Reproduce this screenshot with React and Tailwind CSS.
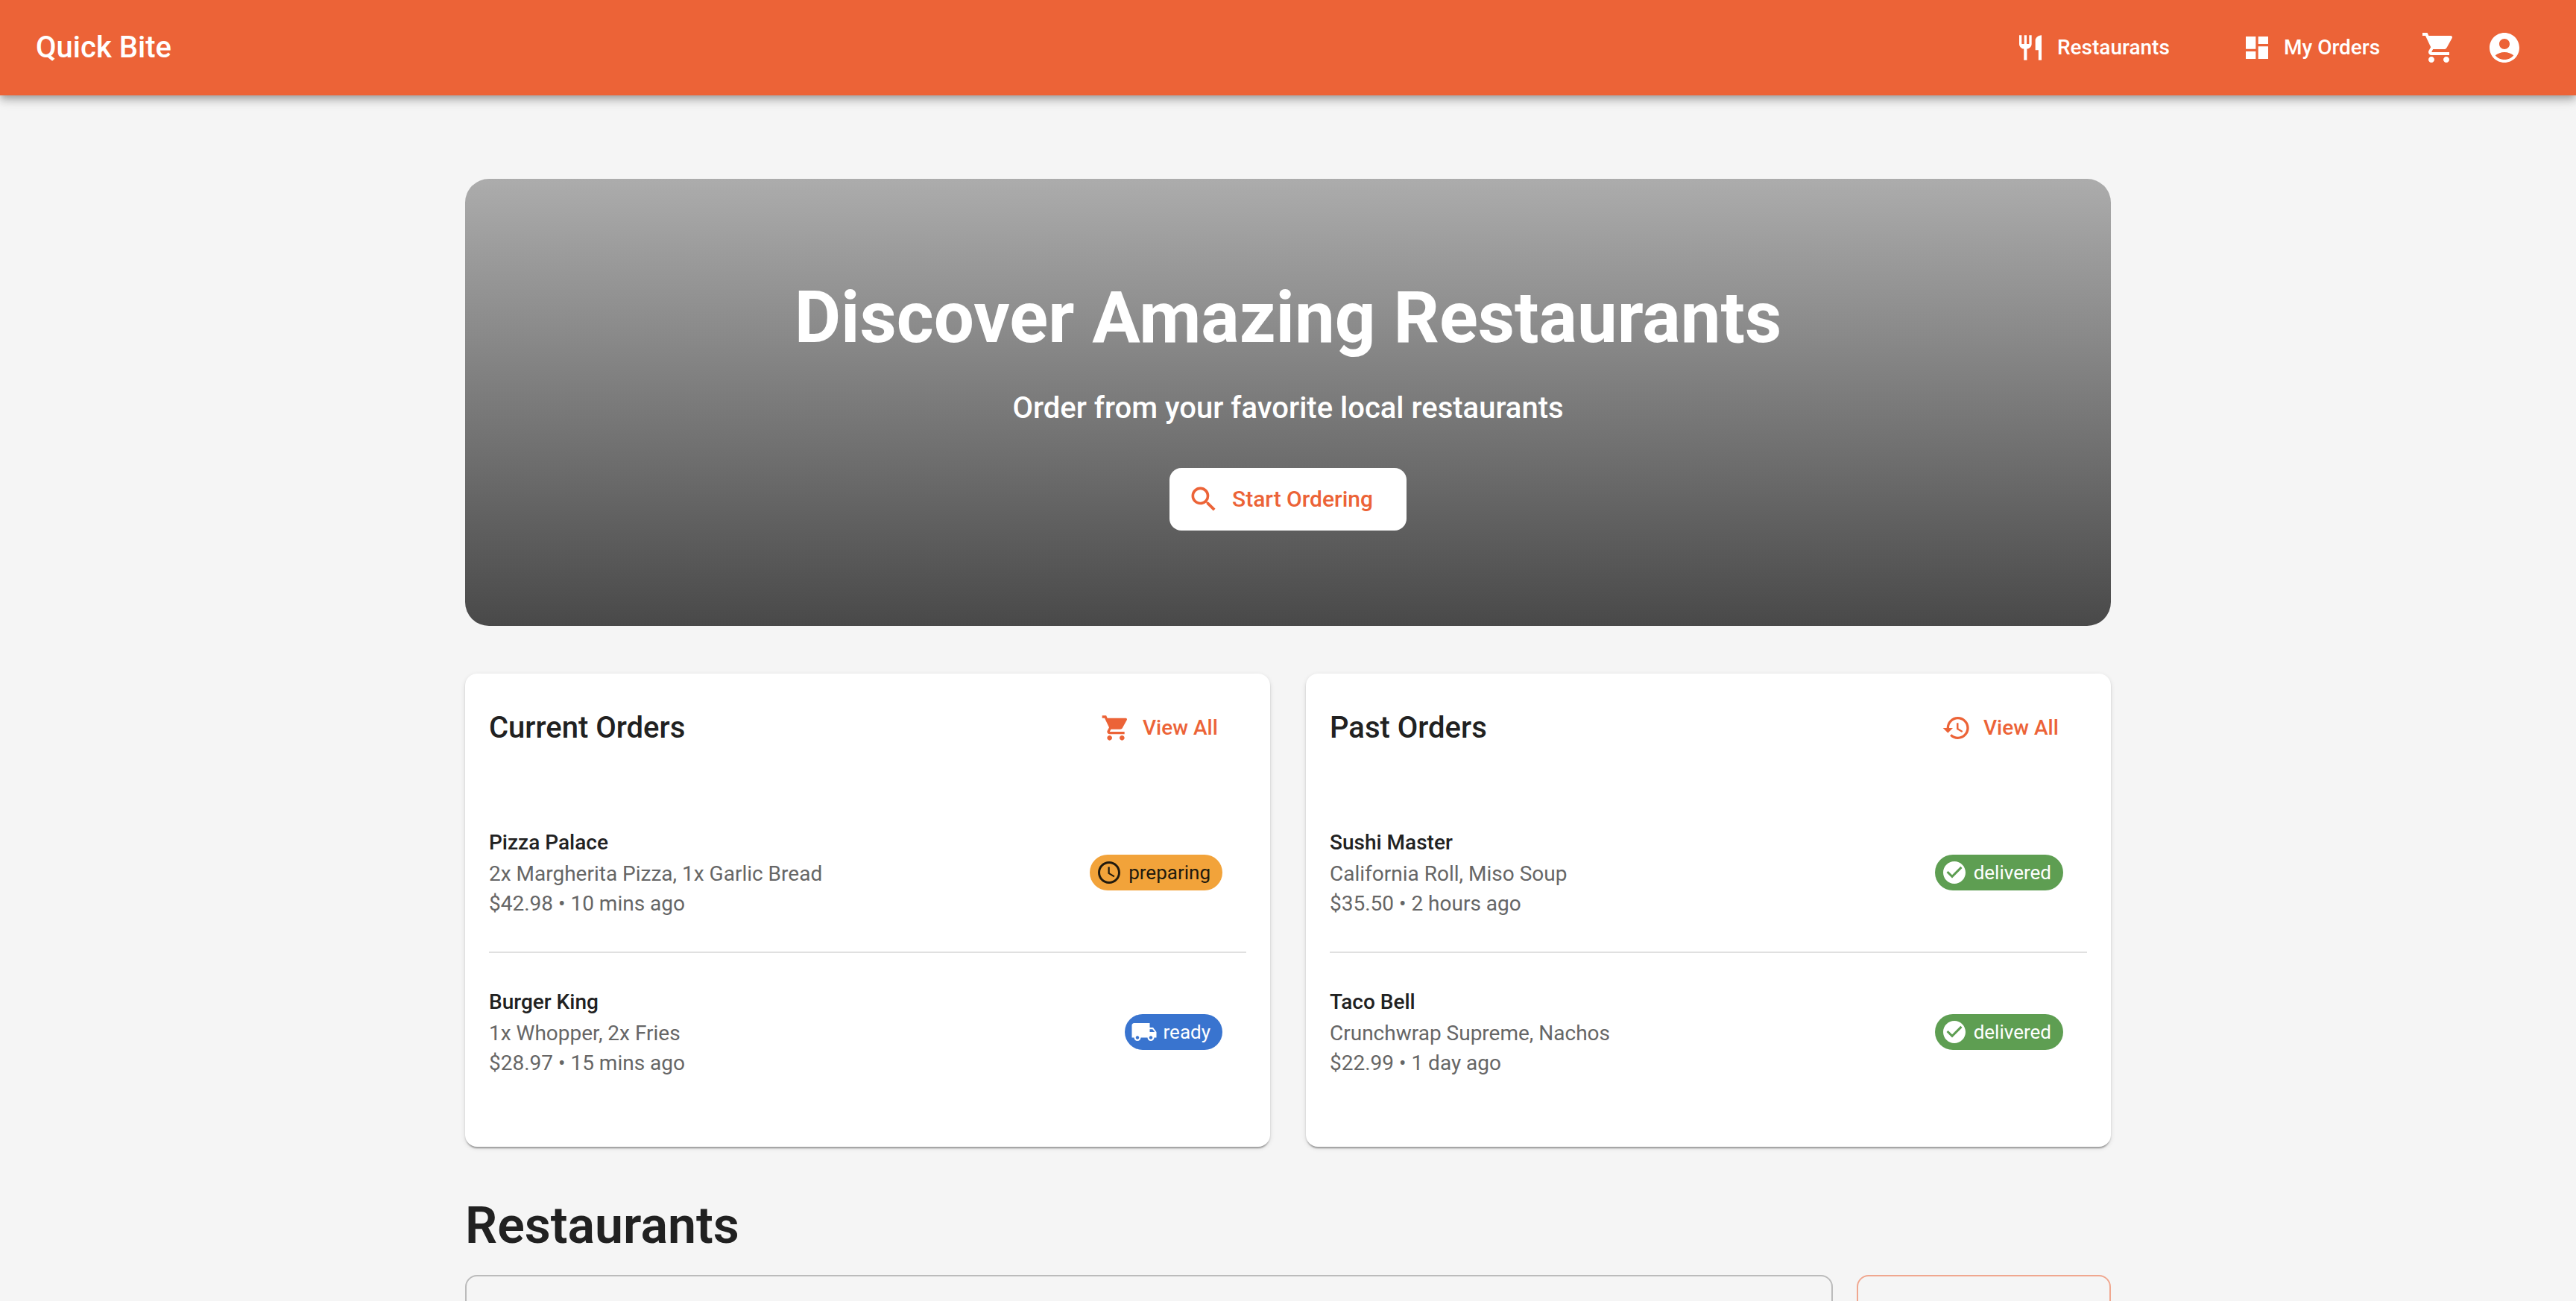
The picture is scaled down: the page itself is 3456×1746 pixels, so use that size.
import React from "react";
import {
  MdAccessTime,
  MdCheckCircle,
  MdDashboard,
  MdHistory,
  MdLocalShipping,
  MdRestaurant,
  MdSearch,
  MdShoppingCart,
} from "react-icons/md";

function AccountIcon({ className }) {
  return (
    <svg viewBox="0 0 24 24" fill="currentColor" className={className} aria-hidden="true">
      <path d="M12 2C6.48 2 2 6.48 2 12s4.48 10 10 10 10-4.48 10-10S17.52 2 12 2zm0 4c1.93 0 3.5 1.57 3.5 3.5S13.93 13 12 13s-3.5-1.57-3.5-3.5S10.07 6 12 6zm0 14c-2.03 0-4.43-.82-6.14-2.88C7.55 15.8 9.68 15 12 15s4.45.8 6.14 2.12C16.43 19.18 14.03 20 12 20z" />
    </svg>
  );
}

const statuses = {
  preparing: { Icon: MdAccessTime, style: "bg-[#f2a33a] text-[#211a0e]" },
  ready: { Icon: MdLocalShipping, style: "bg-[#3974cf] text-white" },
  delivered: { Icon: MdCheckCircle, style: "bg-[#5e9e52] text-white" },
};

const currentOrders = [
  { name: "Pizza Palace", items: "2x Margherita Pizza, 1x Garlic Bread", price: "$42.98", time: "10 mins ago", status: "preparing" },
  { name: "Burger King", items: "1x Whopper, 2x Fries", price: "$28.97", time: "15 mins ago", status: "ready" },
];

const pastOrders = [
  { name: "Sushi Master", items: "California Roll, Miso Soup", price: "$35.50", time: "2 hours ago", status: "delivered" },
  { name: "Taco Bell", items: "Crunchwrap Supreme, Nachos", price: "$22.99", time: "1 day ago", status: "delivered" },
];

function StatusChip({ status }) {
  const { Icon, style } = statuses[status];
  return (
    <span className={`flex h-12 shrink-0 items-center gap-2 rounded-full pl-2 pr-4 text-[26px] leading-none ${style}`}>
      <Icon className="size-9" />
      {status}
    </span>
  );
}

function OrdersCard({ title, icon: Icon, orders }) {
  return (
    <section className="rounded-2xl bg-white px-8 pb-12 shadow-[0_4px_2px_-2px_rgba(0,0,0,0.2),0_2px_2px_0_rgba(0,0,0,0.14),0_2px_6px_0_rgba(0,0,0,0.12)]">
      <div className="mb-4 flex h-[145px] items-center justify-between pr-4">
        <h2 className="text-[40px] font-medium leading-16">{title}</h2>
        <button type="button" className="flex min-w-[195px] items-center gap-4 rounded-2xl px-4 py-3 text-[28px] font-medium leading-12 text-[#ec6337]">
          <Icon className="size-10" />
          View All
        </button>
      </div>
      <ul className="divide-y-2 divide-[#e0e0e0]">
        {orders.map((order) => (
          <li key={order.name} className="flex items-center justify-between py-11 pr-8">
            <div className="text-[28px] leading-10 text-[#666666]">
              <h3 className="font-medium leading-11 text-[#212121]">{order.name}</h3>
              <p>{order.items}</p>
              <p>
                {order.price} • {order.time}
              </p>
            </div>
            <StatusChip status={order.status} />
          </li>
        ))}
      </ul>
    </section>
  );
}

export default function App() {
  return (
    <div className="h-screen overflow-hidden bg-[#f5f5f5] font-['Roboto',sans-serif] text-[#212121]">
      <header className="relative z-10 flex h-32 items-center justify-between bg-[#ec6337] pl-12 pr-14 text-white shadow-[0_4px_8px_-2px_rgba(0,0,0,0.2),0_8px_10px_0_rgba(0,0,0,0.14),0_2px_20px_0_rgba(0,0,0,0.12)]">
        <a href="#home" className="text-[40px] font-medium leading-16">
          Quick Bite
        </a>
        <nav className="flex items-center gap-2 text-[28px] font-medium leading-12">
          <a href="#restaurants" className="mr-20 flex min-w-[216px] items-center gap-4">
            <MdRestaurant className="size-10" />
            Restaurants
          </a>
          <a href="#orders" className="mr-6 flex min-w-[192px] items-center gap-4">
            <MdDashboard className="size-10" />
            My Orders
          </a>
          <button type="button" aria-label="Cart" className="rounded-full p-4">
            <MdShoppingCart className="size-12" />
          </button>
          <button type="button" aria-label="Account" className="rounded-full p-4">
            <AccountIcon className="size-12" />
          </button>
        </nav>
      </header>

      <main className="mx-auto flex max-w-[2400px] flex-col gap-16 px-24 pt-28">
        <section className="flex flex-col items-center rounded-[32px] bg-linear-to-b/srgb from-[#acacac] to-[#494949] py-32 text-center text-white">
          <h1 className="text-[96px] font-bold leading-[116px]">Discover Amazing Restaurants</h1>
          <p className="mt-8 text-[40px] font-medium leading-16">Order from your favorite local restaurants</p>
          <button
            type="button"
            className="mt-12 flex min-w-[318px] items-center gap-4 rounded-2xl bg-white py-4 pl-6 pr-8 text-[30px] font-medium leading-[52px] text-[#ec6337]"
          >
            <MdSearch className="size-11" />
            Start Ordering
          </button>
        </section>

        <div className="grid grid-cols-2 gap-12">
          <OrdersCard title="Current Orders" icon={MdShoppingCart} orders={currentOrders} />
          <OrdersCard title="Past Orders" icon={MdHistory} orders={pastOrders} />
        </div>

        <section id="restaurants">
          <h2 className="text-[68px] font-semibold leading-[84px]">Restaurants</h2>
          <div className="mt-6 flex gap-8">
            <input
              type="search"
              aria-label="Search restaurants"
              className="h-28 min-w-0 flex-1 rounded-2xl border-2 border-[#bbbbbb] px-7 text-[32px]"
            />
            <button type="button" aria-label="Filters" className="h-28 w-[341px] rounded-2xl border-2 border-[#f0a78f]" />
          </div>
        </section>
      </main>
    </div>
  );
}
